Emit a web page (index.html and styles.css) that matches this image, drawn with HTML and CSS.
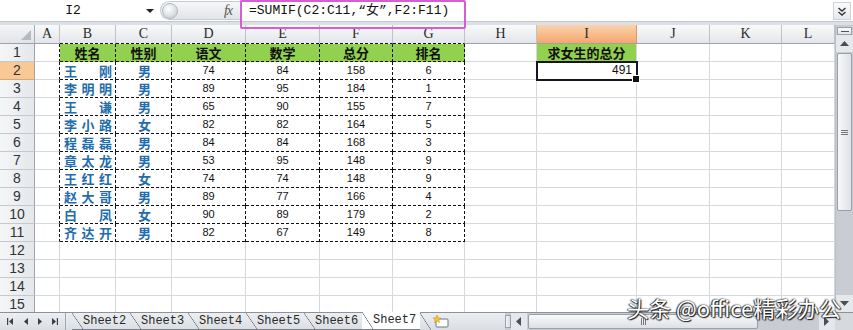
FILE: index.html
```html
<!DOCTYPE html>
<html lang="zh-CN">
<head>
    <meta charset="UTF-8">
    <title>SUMIF 求女生的总分</title>
    <link rel="stylesheet" href="styles.css">
</head>
<body>
<div class="app">
    <!-- 编辑栏 -->
    <div class="formula-bar">
        <div class="namebox"><span class="namebox-text">I2</span><span class="drop"></span></div>
        <div class="fx-area"><span class="knob"></span><span class="fx">fx</span></div>
        <div class="formula">=SUMIF(C2:C11,“女”,F2:F11)</div>
        <div class="expand">
            <svg width="16" height="18" viewBox="0 0 16 18">
                <polyline points="4.5,6 8,9 11.5,6" fill="none" stroke="#333" stroke-width="1.4"/>
                <polyline points="4.5,10 8,13 11.5,10" fill="none" stroke="#333" stroke-width="1.4"/>
            </svg>
        </div>
    </div>
    <div class="bar-gap"></div>

    <div class="main">
        <div class="sheet">
            <!-- 列标 -->
            <div class="corner"><span class="corner-tri"></span></div>
            <div class="ch">A</div>
            <div class="ch tb">B</div>
            <div class="ch tb">C</div>
            <div class="ch tb">D</div>
            <div class="ch tb">E</div>
            <div class="ch tb">F</div>
            <div class="ch tb">G</div>
            <div class="ch">H</div>
            <div class="ch act">I</div>
            <div class="ch">J</div>
            <div class="ch">K</div>
            <div class="ch">L</div>

            <!-- 1 -->
            <div class="rh">1</div>
            <div class="c edge"></div>
            <div class="c t hd">姓名</div>
            <div class="c t hd">性别</div>
            <div class="c t hd">语文</div>
            <div class="c t hd">数学</div>
            <div class="c t hd">总分</div>
            <div class="c t hd">排名</div>
            <div class="c"></div>
            <div class="c hd green">求女生的总分</div>
            <div class="c"></div><div class="c"></div><div class="c"></div>

            <!-- 2 -->
            <div class="rh act">2</div>
            <div class="c edge"></div>
            <div class="c t name"><span>王</span><span>刚</span></div>
            <div class="c t sex">男</div>
            <div class="c t num">74</div>
            <div class="c t num">84</div>
            <div class="c t num">158</div>
            <div class="c t num">6</div>
            <div class="c"></div>
            <div class="c sel">491</div>
            <div class="c"></div><div class="c"></div><div class="c"></div>

            <!-- 3 -->
            <div class="rh">3</div>
            <div class="c edge"></div>
            <div class="c t name"><span>李</span><span>明</span><span>明</span></div>
            <div class="c t sex">男</div>
            <div class="c t num">89</div>
            <div class="c t num">95</div>
            <div class="c t num">184</div>
            <div class="c t num">1</div>
            <div class="c"></div><div class="c"></div>
            <div class="c"></div><div class="c"></div><div class="c"></div>

            <!-- 4 -->
            <div class="rh">4</div>
            <div class="c edge"></div>
            <div class="c t name"><span>王</span><span>谦</span></div>
            <div class="c t sex">男</div>
            <div class="c t num">65</div>
            <div class="c t num">90</div>
            <div class="c t num">155</div>
            <div class="c t num">7</div>
            <div class="c"></div><div class="c"></div>
            <div class="c"></div><div class="c"></div><div class="c"></div>

            <!-- 5 -->
            <div class="rh">5</div>
            <div class="c edge"></div>
            <div class="c t name"><span>李</span><span>小</span><span>路</span></div>
            <div class="c t sex">女</div>
            <div class="c t num">82</div>
            <div class="c t num">82</div>
            <div class="c t num">164</div>
            <div class="c t num">5</div>
            <div class="c"></div><div class="c"></div>
            <div class="c"></div><div class="c"></div><div class="c"></div>

            <!-- 6 -->
            <div class="rh">6</div>
            <div class="c edge"></div>
            <div class="c t name"><span>程</span><span>磊</span><span>磊</span></div>
            <div class="c t sex">男</div>
            <div class="c t num">84</div>
            <div class="c t num">84</div>
            <div class="c t num">168</div>
            <div class="c t num">3</div>
            <div class="c"></div><div class="c"></div>
            <div class="c"></div><div class="c"></div><div class="c"></div>

            <!-- 7 -->
            <div class="rh">7</div>
            <div class="c edge"></div>
            <div class="c t name"><span>章</span><span>太</span><span>龙</span></div>
            <div class="c t sex">男</div>
            <div class="c t num">53</div>
            <div class="c t num">95</div>
            <div class="c t num">148</div>
            <div class="c t num">9</div>
            <div class="c"></div><div class="c"></div>
            <div class="c"></div><div class="c"></div><div class="c"></div>

            <!-- 8 -->
            <div class="rh">8</div>
            <div class="c edge"></div>
            <div class="c t name"><span>王</span><span>红</span><span>红</span></div>
            <div class="c t sex">女</div>
            <div class="c t num">74</div>
            <div class="c t num">74</div>
            <div class="c t num">148</div>
            <div class="c t num">9</div>
            <div class="c"></div><div class="c"></div>
            <div class="c"></div><div class="c"></div><div class="c"></div>

            <!-- 9 -->
            <div class="rh">9</div>
            <div class="c edge"></div>
            <div class="c t name"><span>赵</span><span>大</span><span>哥</span></div>
            <div class="c t sex">男</div>
            <div class="c t num">89</div>
            <div class="c t num">77</div>
            <div class="c t num">166</div>
            <div class="c t num">4</div>
            <div class="c"></div><div class="c"></div>
            <div class="c"></div><div class="c"></div><div class="c"></div>

            <!-- 10 -->
            <div class="rh">10</div>
            <div class="c edge"></div>
            <div class="c t name"><span>白</span><span>凤</span></div>
            <div class="c t sex">女</div>
            <div class="c t num">90</div>
            <div class="c t num">89</div>
            <div class="c t num">179</div>
            <div class="c t num">2</div>
            <div class="c"></div><div class="c"></div>
            <div class="c"></div><div class="c"></div><div class="c"></div>

            <!-- 11 -->
            <div class="rh">11</div>
            <div class="c edge"></div>
            <div class="c t name"><span>齐</span><span>达</span><span>开</span></div>
            <div class="c t sex">男</div>
            <div class="c t num">82</div>
            <div class="c t num">67</div>
            <div class="c t num">149</div>
            <div class="c t num">8</div>
            <div class="c"></div><div class="c"></div>
            <div class="c"></div><div class="c"></div><div class="c"></div>

            <!-- 12-15 空行 -->
            <div class="rh">12</div>
            <div class="c"></div><div class="c"></div><div class="c"></div><div class="c"></div>
            <div class="c"></div><div class="c"></div><div class="c"></div><div class="c"></div>
            <div class="c"></div><div class="c"></div><div class="c"></div><div class="c"></div>

            <div class="rh">13</div>
            <div class="c"></div><div class="c"></div><div class="c"></div><div class="c"></div>
            <div class="c"></div><div class="c"></div><div class="c"></div><div class="c"></div>
            <div class="c"></div><div class="c"></div><div class="c"></div><div class="c"></div>

            <div class="rh">14</div>
            <div class="c"></div><div class="c"></div><div class="c"></div><div class="c"></div>
            <div class="c"></div><div class="c"></div><div class="c"></div><div class="c"></div>
            <div class="c"></div><div class="c"></div><div class="c"></div><div class="c"></div>

            <div class="rh">15</div>
            <div class="c"></div><div class="c"></div><div class="c"></div><div class="c"></div>
            <div class="c"></div><div class="c"></div><div class="c"></div><div class="c"></div>
            <div class="c"></div><div class="c"></div><div class="c"></div><div class="c"></div>
        </div>

        <!-- 垂直滚动条 -->
        <div class="vscroll">
            <div class="vs-split"></div>
            <div class="vs-btn">
                <svg width="9" height="6" viewBox="0 0 9 6"><polygon points="0,5 4.5,0 9,5" fill="#4a4f56"/></svg>
            </div>
            <div class="vs-thumb"><span class="grip-v"></span></div>
            <div class="vs-track"></div>
            <div class="vs-btn">
                <svg width="9" height="6" viewBox="0 0 9 6"><polygon points="0,0 4.5,5 9,0" fill="#4a4f56"/></svg>
            </div>
        </div>
    </div>

    <!-- 工作表标签 -->
    <div class="tabbar">
        <div class="tab-nav">
            <svg width="64" height="17" viewBox="0 0 64 17">
                <rect x="7" y="5" width="1.2" height="7" fill="#3c4046"/>
                <polygon points="13,5 13,12 9,8.5" fill="#3c4046"/>
                <polygon points="28,5 28,12 24,8.5" fill="#3c4046"/>
                <polygon points="38,5 38,12 42,8.5" fill="#3c4046"/>
                <polygon points="52,5 52,12 56,8.5" fill="#3c4046"/>
                <rect x="56.8" y="5" width="1.2" height="7" fill="#3c4046"/>
            </svg>
        </div>
        <div class="tabs">
            <div class="tab">Sheet2</div>
            <div class="tab">Sheet3</div>
            <div class="tab">Sheet4</div>
            <div class="tab">Sheet5</div>
            <div class="tab">Sheet6</div>
            <div class="tab active">Sheet7</div>
            <div class="tab new">
                <svg width="18" height="14" viewBox="0 0 18 14">
                    <rect x="4" y="4" width="12" height="8" rx="1" fill="#fff" stroke="#6f7780"/>
                    <polygon points="5,0 6.2,2.8 9,3 6.8,4.8 7.6,7.6 5,6 2.4,7.6 3.2,4.8 1,3 3.8,2.8" fill="#f3c23a" stroke="#c98f12" stroke-width="0.5"/>
                </svg>
            </div>
        </div>
        <div class="hscroll">
            <div class="hs-split"></div>
            <div class="hs-btn">
                <svg width="6" height="9" viewBox="0 0 6 9"><polygon points="5,0 5,9 0,4.5" fill="#4a4f56"/></svg>
            </div>
            <div class="hs-thumb"><span class="grip-h"></span></div>
            <div class="hs-track"></div>
            <div class="hs-btn">
                <svg width="6" height="9" viewBox="0 0 6 9"><polygon points="0,0 0,9 5,4.5" fill="#4a4f56"/></svg>
            </div>
        </div>
        <div class="corner-box"></div>
    </div>

    <!-- 标注框与水印 -->
    <div class="mark"></div>
    <div class="watermark">头条 @office精彩办公</div>
</div>
</body>
</html>
```

FILE: styles.css
```css
* {
    box-sizing: border-box;
}

body {
    margin: 0;
    width: 853px;
    height: 330px;
    overflow: hidden;
    background: #fff;
    font-family: "Liberation Sans", "Noto Sans CJK SC", sans-serif;
    color: #111;
}

.app {
    position: relative;
    display: flex;
    flex-direction: column;
    height: 330px;
}

/* 编辑栏 */
.formula-bar {
    height: 22px;
    display: flex;
    background: #fff;
    border-bottom: 1px solid #c3c8ce;
}

.namebox {
    width: 160px;
    display: flex;
    align-items: center;
}

.namebox-text {
    flex: 1;
    text-align: center;
    font-family: "Liberation Mono", "Noto Sans CJK SC", monospace;
    font-size: 13px;
}

.drop {
    width: 0;
    height: 0;
    border-left: 4px solid transparent;
    border-right: 4px solid transparent;
    border-top: 4px solid #222;
    margin-right: 6px;
}

.fx-area {
    width: 80px;
    display: flex;
    align-items: center;
    background: linear-gradient(#f6f7f8, #e1e4e8);
    border: 1px solid #c7cbd0;
    border-right: none;
    border-radius: 11px 0 0 11px;
    margin: 1px 0;
}

.knob {
    width: 16px;
    height: 16px;
    border-radius: 50%;
    margin-left: 1px;
    background: radial-gradient(circle at 40% 35%, #ffffff, #d3d7dc 70%, #b8bdc4);
    border: 1px solid #b3b8bf;
}

.fx {
    margin-left: auto;
    margin-right: 8px;
    font-family: "Liberation Serif", serif;
    font-style: italic;
    font-size: 14px;
    color: #555;
    letter-spacing: -1px;
}

.formula {
    flex: 1;
    border-left: 1px solid #c3c8ce;
    padding-left: 8px;
    font-family: "Liberation Mono", "Noto Sans CJK SC", monospace;
    font-size: 13px;
    line-height: 21px;
    white-space: nowrap;
}

.expand {
    width: 18px;
    display: flex;
    align-items: center;
    justify-content: center;
    border: 1px solid #cfd3d8;
    background: linear-gradient(#fbfbfc, #e6e9ec);
    margin: 2px 2px 1px 0;
}

.bar-gap {
    height: 3px;
    background: #dde1e6;
}

/* 表格区域 */
.main {
    flex: 1;
    display: flex;
    overflow: hidden;
}

.sheet {
    width: 835px;
    display: grid;
    grid-template-columns: 35px 25px 56px 56px 74px 74px 73px 72px 72px 100px 73px 72px 53px;
    grid-template-rows: 19px;
    grid-auto-rows: 18px;
    overflow: hidden;
    align-content: start;
}

.corner {
    display: flex;
    align-items: flex-end;
    justify-content: flex-end;
    padding: 0 3px 3px 0;
    background: linear-gradient(#f4f5f7, #e1e4e8);
    border-right: 1px solid #a7acb2;
    border-bottom: 1px solid #9ea3a9;
}

.corner-tri {
    width: 10px;
    height: 10px;
    background: #b5bac0;
    clip-path: polygon(100% 0, 100% 100%, 0 100%);
}

.ch {
    background: linear-gradient(#f8f9fa, #e3e6ea);
    border-right: 1px solid #bfc3c8;
    border-bottom: 1px solid #9ea3a9;
    text-align: center;
    font-family: "Liberation Serif", serif;
    font-size: 14px;
    line-height: 18px;
    color: #2b2b2b;
}

.ch.tb {
    border-bottom-color: transparent;
    background: repeating-linear-gradient(90deg, #111 0 3px, transparent 3px 5px) left bottom / 100% 1px no-repeat border-box,
                linear-gradient(#f8f9fa, #e3e6ea);
}

.ch.act {
    background: linear-gradient(#fad3ae, #f5a66c);
    border-right-color: #d99a6a;
}

.rh {
    background: linear-gradient(90deg, #f5f6f8, #e4e7eb);
    border-right: 1px solid #9ea3a9;
    border-bottom: 1px solid #c5c9ce;
    text-align: center;
    font-size: 14px;
    line-height: 17px;
    color: #333;
}

.rh.act {
    background: #f8c996;
    border-bottom-color: #d9a676;
}

.c {
    border-right: 1px solid #d5d8dc;
    border-bottom: 1px solid #d5d8dc;
    line-height: 17px;
    white-space: nowrap;
}

/* 虚线边框 */
.t {
    border-color: transparent;
    background-image: repeating-linear-gradient(90deg, #111 0 3px, transparent 3px 5px),
                      repeating-linear-gradient(180deg, #111 0 3px, transparent 3px 5px);
    background-size: 100% 1px, 1px 100%;
    background-position: left bottom, right top;
    background-repeat: no-repeat;
    background-origin: border-box;
}

.edge {
    border-right-color: transparent;
    background-image: repeating-linear-gradient(180deg, #111 0 3px, transparent 3px 5px);
    background-size: 1px 100%;
    background-position: right top;
    background-repeat: no-repeat;
    background-origin: border-box;
}

.hd {
    background-color: #92d050;
    text-align: center;
    font-family: "Noto Sans CJK SC", sans-serif;
    font-weight: bold;
    font-size: 13px;
}

.name {
    display: flex;
    justify-content: space-between;
    padding: 0 3px 0 4px;
    font-family: "Noto Sans CJK SC", sans-serif;
    font-weight: bold;
    font-size: 13px;
    color: #1f6dac;
}

.sex {
    text-align: center;
    font-family: "Noto Sans CJK SC", sans-serif;
    font-weight: bold;
    font-size: 13px;
    color: #1f6dac;
    padding-left: 2px;
}

.num {
    text-align: center;
    font-size: 11px;
}

.sel {
    position: relative;
    z-index: 2;
    outline: 2px solid #161622;
    outline-offset: -1px;
    text-align: right;
    padding-right: 4px;
    font-size: 12px;
}

.sel::after {
    content: "";
    position: absolute;
    right: -4px;
    bottom: -4px;
    width: 6px;
    height: 6px;
    background: #111;
    border: 1px solid #fff;
}

/* 垂直滚动条 */
.vscroll {
    width: 18px;
    display: flex;
    flex-direction: column;
    background: #c9cdd3;
    border-left: 1px solid #b9bec4;
}

.vs-split {
    height: 8px;
    margin: 2px 1px 0;
    background: linear-gradient(#fafbfc, #e2e5e9);
    border: 1px solid #9ca1a8;
    display: flex;
    align-items: center;
    justify-content: center;
}

.vs-split::after {
    content: "";
    width: 8px;
    height: 1px;
    background: #555;
}

.vs-btn {
    height: 17px;
    display: flex;
    align-items: center;
    justify-content: center;
    background: #e6e9ec;
}

.vs-thumb {
    height: 158px;
    margin: 1px 1px 0;
    border: 1px solid #9aa0a7;
    border-radius: 2px;
    background: linear-gradient(90deg, #f7f8f9, #dfe2e6);
    display: flex;
    align-items: center;
    justify-content: center;
}

.grip-v {
    width: 7px;
    height: 5px;
    border-top: 1px solid #777;
    border-bottom: 1px solid #777;
    background: linear-gradient(#777, #777) center / 100% 1px no-repeat;
}

.vs-track {
    flex: 1;
}

/* 工作表标签栏 */
.tabbar {
    height: 18px;
    display: flex;
    background: linear-gradient(#eceef1, #dadee3);
    border-top: 1px solid #8d929a;
}

.tab-nav {
    width: 66px;
    display: flex;
    align-items: center;
    border-right: 1px solid #a3a8af;
}

.tabs {
    width: 439px;
    display: flex;
    padding-left: 6px;
}

.tab {
    position: relative;
    width: 58px;
    padding-left: 11px;
    font-family: "Liberation Mono", monospace;
    font-size: 12px;
    line-height: 16px;
    color: #2a2a2a;
    border-bottom: 1px solid #7d828a;
}

.tab::before {
    content: "";
    position: absolute;
    left: 0;
    top: 0;
    width: 11px;
    height: 100%;
    background: linear-gradient(to top right, transparent calc(50% - 0.6px), #6b7078 50%, transparent calc(50% + 0.6px));
}

.tab.active {
    background: #fff;
    margin-top: -1px;
    line-height: 17px;
}

.tab.new {
    width: 40px;
    display: flex;
    align-items: center;
    padding-left: 12px;
    border-bottom: none;
}

.hscroll {
    width: 330px;
    display: flex;
    background: #c9cdd3;
}

.hs-split {
    width: 6px;
    background: linear-gradient(90deg, #f4f5f7, #d7dbe0);
    border: 1px solid #9ca1a8;
    margin: 2px 0;
}

.hs-btn {
    width: 16px;
    display: flex;
    align-items: center;
    justify-content: center;
    background: #e4e7eb;
}

.hs-thumb {
    width: 230px;
    margin: 1px 0 1px 1px;
    border: 1px solid #9aa0a7;
    border-radius: 2px;
    background: linear-gradient(#f8f9fa, #dde0e4);
    display: flex;
    align-items: center;
    justify-content: center;
}

.grip-h {
    width: 5px;
    height: 7px;
    border-left: 1px solid #777;
    border-right: 1px solid #777;
    background: linear-gradient(#777, #777) center / 1px 100% no-repeat;
}

.hs-track {
    flex: 1;
}

.corner-box {
    flex: 1;
    background: #d6d9de;
}

/* 标注框 */
.mark {
    position: absolute;
    left: 240px;
    top: 0;
    width: 226px;
    height: 29px;
    border: 2px solid #d45fd4;
    border-radius: 2px;
}

.watermark {
    position: absolute;
    left: 627px;
    top: 294px;
    font-family: "Noto Sans CJK SC", sans-serif;
    font-size: 22px;
    line-height: 27px;
    color: #fff;
    white-space: nowrap;
    text-shadow: 0 0 2px #000, 1px 1px 1px #222, -1px 0 1px #444;
}
```
